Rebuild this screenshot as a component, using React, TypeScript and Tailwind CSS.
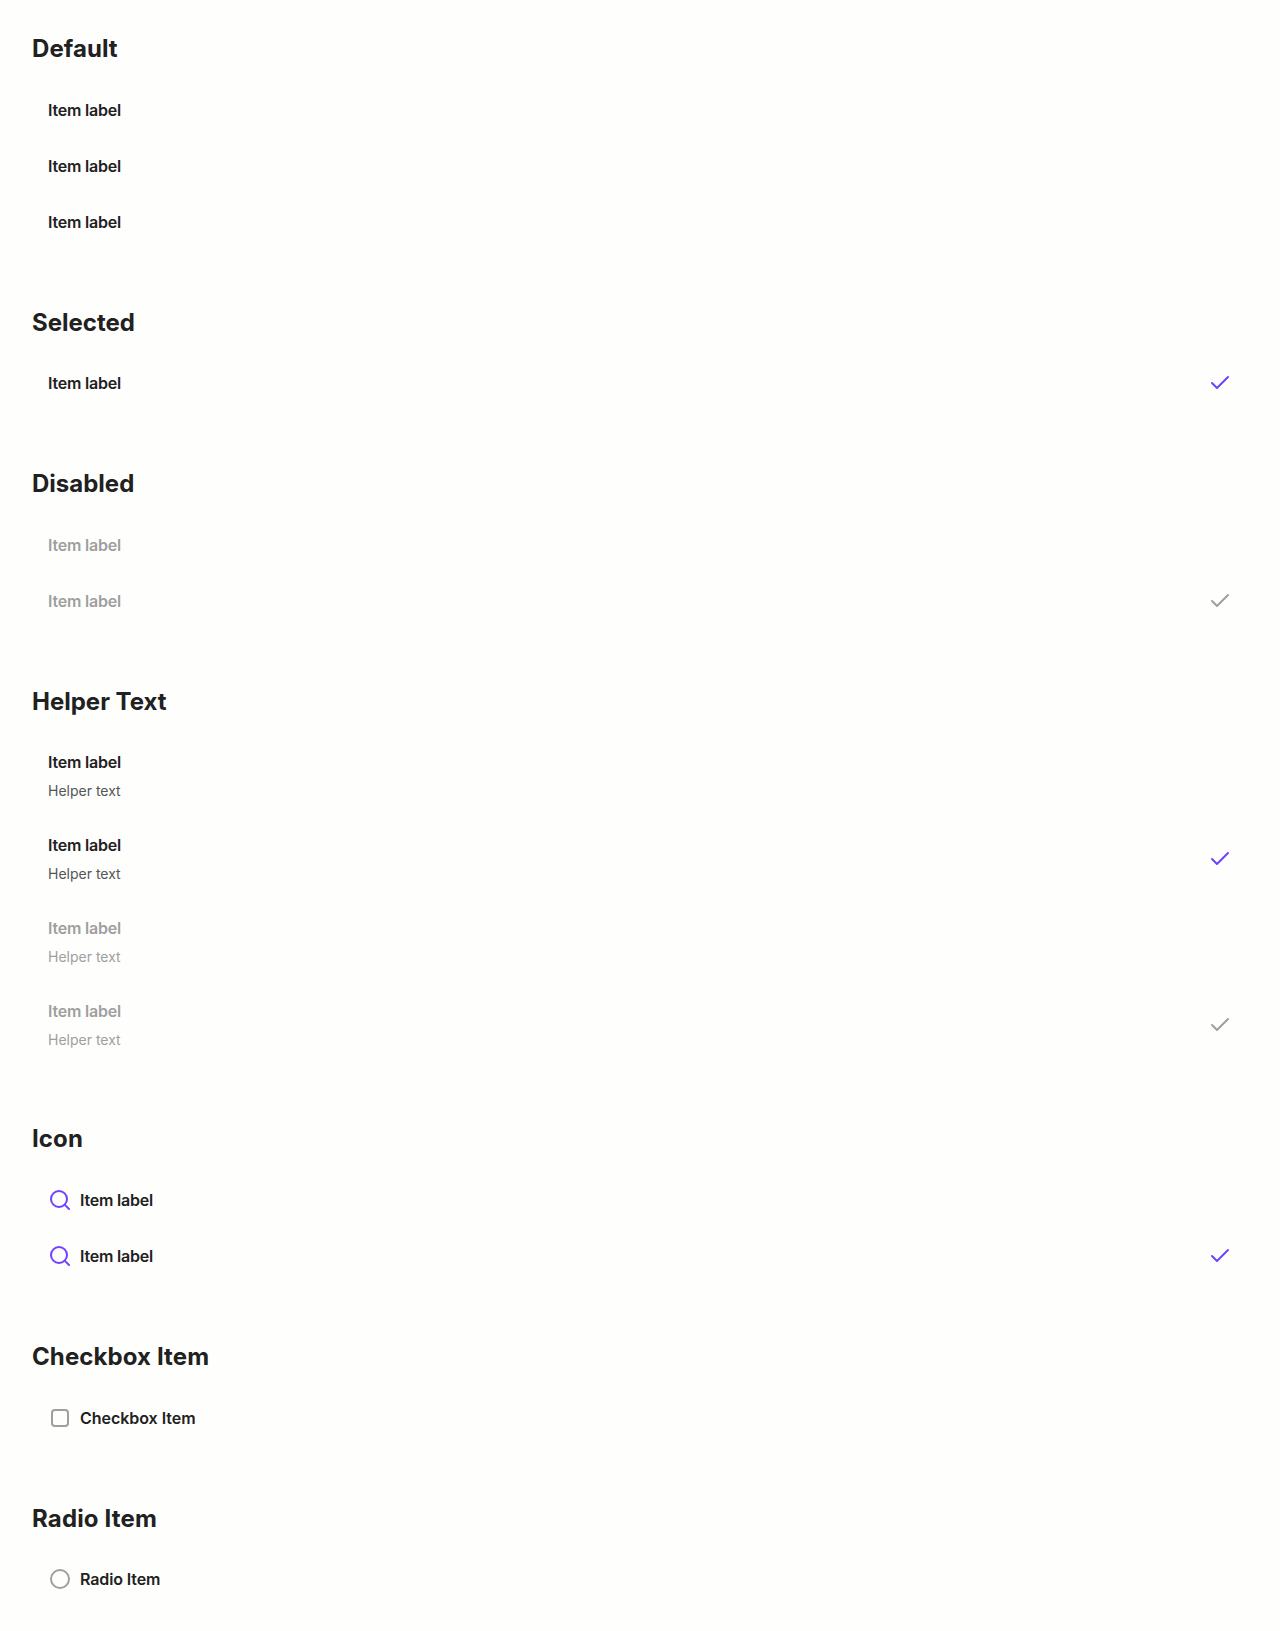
import React from 'react';

function Check({ disabled }: { disabled?: boolean }) {
  return (
    <svg className={`size-6 shrink-0 ${disabled ? 'text-[#9f9f9f]' : 'text-[#7042ff]'}`} viewBox="0 0 24 24" fill="none" stroke="currentColor" strokeWidth="2" strokeLinecap="round" strokeLinejoin="round">
      <polyline points="20 6 9 17 4 12" />
    </svg>
  );
}

function Search() {
  return (
    <svg className="size-6 shrink-0 text-[#7042ff]" viewBox="0 0 24 24" fill="none" stroke="currentColor" strokeWidth="2" strokeLinecap="round" strokeLinejoin="round">
      <circle cx="11" cy="11" r="8" />
      <line x1="21" y1="21" x2="16.65" y2="16.65" />
    </svg>
  );
}

type ItemProps = {
  label?: string;
  tracking?: string;
  helper?: boolean;
  selected?: boolean;
  disabled?: boolean;
  icon?: React.ReactNode;
};

function Item({ label = 'Item label', tracking = 'tracking-[-0.22px]', helper, selected, disabled, icon }: ItemProps) {
  return (
    <div className="flex items-center gap-2 p-4">
      {icon}
      <div className="flex grow flex-col gap-1.5">
        <span className={`text-base leading-6 font-semibold ${tracking} ${disabled ? 'text-[#9f9f9f]' : 'text-[#212121]'}`}>{label}</span>
        {helper && <span className={`text-sm leading-[21px] ${disabled ? 'text-[#9f9f9f]' : 'text-[#555555]'}`}>Helper text</span>}
      </div>
      {selected && <Check disabled={disabled} />}
    </div>
  );
}

function Section({ title, tracking = '', children }: { title: string; tracking?: string; children: React.ReactNode }) {
  return (
    <section>
      <h2 className={`mb-4 text-2xl leading-[33.6px] font-bold ${tracking}`}>{title}</h2>
      {children}
    </section>
  );
}

export default function App() {
  return (
    <main className="flex h-[1631px] flex-col gap-14 bg-[#fefefd] px-8 pt-8 font-['Inter',sans-serif] text-[#212121]">
      <Section title="Default" tracking="tracking-[0.06px]">
        <Item />
        <Item />
        <Item />
      </Section>
      <Section title="Selected">
        <Item selected />
      </Section>
      <Section title="Disabled">
        <Item disabled />
        <Item disabled selected />
      </Section>
      <Section title="Helper Text">
        <Item helper />
        <Item helper selected />
        <Item helper disabled />
        <Item helper disabled selected />
      </Section>
      <Section title="Icon" tracking="tracking-[0.1px]">
        <Item icon={<Search />} />
        <Item icon={<Search />} selected />
      </Section>
      <Section title="Checkbox Item" tracking="tracking-[0.1px]">
        <Item
          label="Checkbox Item"
          tracking="tracking-[-0.04px]"
          icon={<span className="m-[3px] size-[18px] rounded-[4px] border-2 border-[#9f9f9f]" />}
        />
      </Section>
      <Section title="Radio Item" tracking="tracking-[0.15px]">
        <Item
          label="Radio Item"
          tracking="tracking-[-0.12px]"
          icon={<span className="m-0.5 size-5 rounded-full border-2 border-[#9f9f9f]" />}
        />
      </Section>
    </main>
  );
}
